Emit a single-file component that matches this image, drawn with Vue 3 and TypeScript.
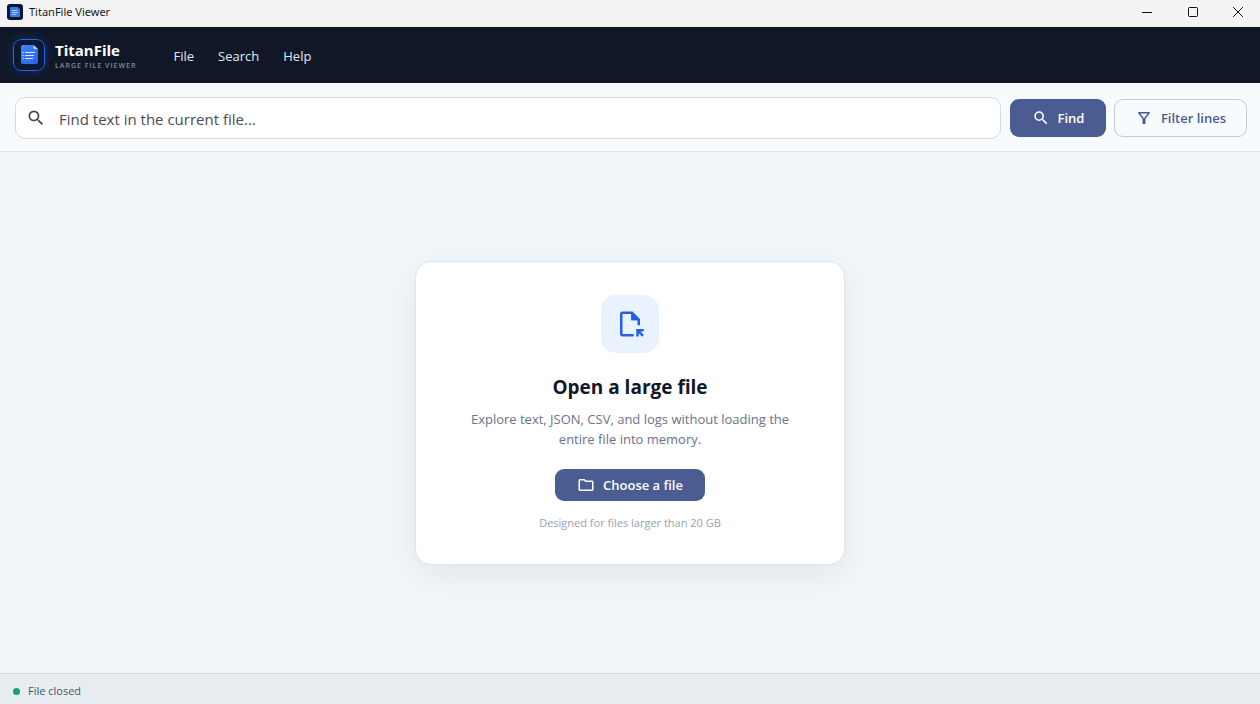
<script setup lang="ts">
import { ref } from 'vue'

const menus: string[] = ['File', 'Search', 'Help']
const query = ref<string>('')
const status = ref<string>('File closed')
</script>

<template>
  <div class="window">
    <div class="titlebar">
      <svg class="app-icon" viewBox="0 0 16 16" aria-hidden="true">
        <rect width="16" height="16" rx="3" fill="#0d1830" />
        <path d="M4 3h6.5L13 5.500V12a1 1 0 0 1-1 1H4a1 1 0 0 1-1-1V4a1 1 0 0 1 1-1z" fill="#3b7cf6" />
        <path d="M5 6.500h5M5 8.500h6M5 10.500h4" stroke="#cfe0ff" stroke-width=".8" />
      </svg>
      <span class="window-title">TitanFile Viewer</span>
      <div class="window-controls">
        <button type="button" aria-label="Minimize">
          <svg viewBox="0 0 12 12"><path d="M1 6.500h10" /></svg>
        </button>
        <button type="button" aria-label="Maximize">
          <svg viewBox="0 0 12 12"><rect x="1.500" y="1.500" width="9" height="9" rx="1" /></svg>
        </button>
        <button type="button" aria-label="Close">
          <svg viewBox="0 0 12 12"><path d="M1 1l10 10M11 1L1 11" /></svg>
        </button>
      </div>
    </div>

    <header class="header">
      <svg class="logo" viewBox="0 0 32 32" aria-hidden="true">
        <defs>
          <linearGradient id="page" x1="0" y1="0" x2="1" y2="1">
            <stop offset="0" stop-color="#3f86fb" />
            <stop offset="1" stop-color="#2b62e6" />
          </linearGradient>
        </defs>
        <rect x=".5" y=".5" width="31" height="31" rx="7.500" fill="#0c1933" stroke="#2563eb" />
        <path d="M10 6h10.500L25 10v13a2 2 0 0 1-2 2H10a2 2 0 0 1-2-2V8a2 2 0 0 1 2-2z" fill="url(#page)" />
        <path d="M20.500 6L25 10h-3.500a1 1 0 0 1-1-1z" fill="#b9d3ff" />
        <path d="M12 13.500h10M12 16.500h9M12 19.500h8" stroke="#d8e6ff" stroke-width="1.200" />
        <path d="M9.500 13.500h1.200M9.500 16.500h1.200M9.500 19.500h1.200" stroke="#d8e6ff" stroke-width="1.200" />
      </svg>
      <div class="brand">
        <span class="brand-name">TitanFile</span>
        <span class="brand-sub">LARGE FILE VIEWER</span>
      </div>
      <nav class="menu">
        <button v-for="item in menus" :key="item" type="button">{{ item }}</button>
      </nav>
    </header>

    <form class="toolbar" @submit.prevent>
      <label class="search">
        <svg viewBox="0 0 24 24" aria-hidden="true">
          <path d="M15.500 14h-.79l-.28-.27A6.470 6.470 0 0 0 16 9.500 6.500 6.500 0 1 0 9.500 16c1.610 0 3.090-.59 4.230-1.570l.27.28v.79l5 4.990L20.490 19l-4.990-5zm-6 0C7.010 14 5 11.990 5 9.500S7.010 5 9.500 5 14 7.010 14 9.500 11.990 14 9.500 14z" />
        </svg>
        <input v-model="query" type="text" placeholder="Find text in the current file..." aria-label="Find text in the current file" />
      </label>
      <button class="btn primary find" type="submit">
        <svg viewBox="0 0 24 24" aria-hidden="true">
          <path d="M15.500 14h-.79l-.28-.27A6.470 6.470 0 0 0 16 9.500 6.500 6.500 0 1 0 9.500 16c1.610 0 3.090-.59 4.230-1.570l.27.28v.79l5 4.990L20.490 19l-4.990-5zm-6 0C7.010 14 5 11.990 5 9.500S7.010 5 9.500 5 14 7.010 14 9.500 11.990 14 9.500 14z" />
        </svg>
        Find
      </button>
      <button class="btn outline" type="button">
        <svg viewBox="0 0 24 24" aria-hidden="true">
          <path d="M7 6h10l-5.010 6.300L7 6zm-2.750-.39C6.270 8.200 10 13 10 13v6c0 .55.45 1 1 1h2c.55 0 1-.45 1-1v-6s3.720-4.800 5.740-7.390A1 1 0 0 0 18.950 4H5.040c-.83 0-1.300.95-.79 1.610z" />
        </svg>
        Filter lines
      </button>
    </form>

    <main class="workspace">
      <section class="card">
        <div class="badge">
          <svg viewBox="0 0 24 24" aria-hidden="true">
            <path d="M14 2H6c-1.100 0-2 .9-2 2v16c0 1.100.9 2 2 2h9v-2H6V4h7v5h5v4h2V8z" />
            <path d="M13 3v6h6z" />
            <path d="M17 22v-6h6v2h-2.600l2.700 2.700-1.400 1.400L19 19.400V22z" />
          </svg>
        </div>
        <h1>Open a large file</h1>
        <p class="lead">Explore text, JSON, CSV, and logs without loading the entire file into memory.</p>
        <button class="btn primary choose" type="button">
          <svg viewBox="0 0 24 24" aria-hidden="true">
            <path d="M9.170 6l2 2H20v10H4V6h5.170M10 4H4c-1.100 0-1.990.9-1.990 2L2 18c0 1.100.9 2 2 2h16c1.100 0 2-.9 2-2V8c0-1.100-.9-2-2-2h-8l-2-2z" />
          </svg>
          Choose a file
        </button>
        <p class="note">Designed for files larger than 20 GB</p>
      </section>
    </main>

    <footer class="status">
      <span class="dot"></span>
      <span>{{ status }}</span>
    </footer>
  </div>
</template>

<style scoped>
* {
  box-sizing: border-box;
}
.window {
  display: flex;
  flex-direction: column;
  min-height: 100vh;
  background: #f1f6fa;
  color: #111827;
  font-family: "Open Sans", "Noto Sans", sans-serif;
}
button,
input {
  font-family: inherit;
}
button {
  border: 0;
  padding: 0;
  background: none;
  cursor: pointer;
}
svg {
  display: block;
  flex: none;
}

.titlebar {
  display: flex;
  align-items: center;
  height: 27px;
  padding: 0 0 4px 7px;
  background: #f3f3f3;
  color: #1a1a1a;
}
.app-icon {
  width: 16px;
  height: 16px;
}
.window-title {
  margin-left: 6px;
  font-family: "Noto Sans", sans-serif;
  font-size: 11px;
  line-height: 16px;
}
.window-controls {
  display: flex;
  margin-left: auto;
}
.window-controls button {
  display: grid;
  place-items: center;
  width: 46px;
  height: 22px;
}
.window-controls button:last-child {
  width: 44px;
}
.window-controls svg {
  width: 12px;
  height: 12px;
  fill: none;
  stroke: #111;
  stroke-width: 1;
}

.header {
  display: flex;
  align-items: center;
  height: 56px;
  padding: 0 13px;
  background: #101828;
}
.logo {
  width: 32px;
  height: 32px;
  border-radius: 8px;
  box-shadow: 0 0 10px rgba(37, 99, 235, 0.3);
}
.brand {
  display: flex;
  flex-direction: column;
  margin-left: 10px;
  padding-top: 2px;
}
.brand-name {
  color: #fff;
  font-size: 15px;
  font-weight: 700;
  line-height: 20px;
}
.brand-sub {
  color: #7f8a9e;
  font-size: 7px;
  font-weight: 600;
  letter-spacing: 1px;
  line-height: 12px;
}
.menu {
  display: flex;
  gap: 24px;
  margin-left: 37px;
  padding-top: 2px;
}
.menu button {
  color: #e2e8f0;
  font-size: 13px;
  line-height: 20px;
}

.toolbar {
  display: flex;
  align-items: center;
  gap: 8px;
  padding: 14px 13px 12px 15px;
  border-bottom: 1px solid #dde4ed;
  background: #f8fbfd;
}
.search {
  display: flex;
  flex: 1;
  align-items: center;
  height: 42px;
  margin-right: 1px;
  padding: 0 10px;
  border: 1px solid #d5daea;
  border-radius: 10px;
  background: #fff;
}
.search svg {
  width: 20px;
  height: 20px;
  fill: #45464f;
}
.search input {
  flex: 1;
  min-width: 0;
  margin-left: 13px;
  padding: 2px 0 0;
  border: 0;
  outline: 0;
  background: none;
  color: #33343c;
  font-size: 15px;
  line-height: 24px;
}
.search input::placeholder {
  color: #4b4c55;
  opacity: 1;
}
.btn {
  display: flex;
  align-items: center;
  justify-content: center;
  border-radius: 9px;
  font-size: 13px;
  font-weight: 600;
  line-height: 20px;
}
.btn svg {
  width: 18px;
  height: 18px;
  margin-right: 8px;
  fill: currentColor;
}
.primary {
  background: #4b5c92;
  color: #fff;
}
.find,
.outline {
  height: 38px;
}
.find {
  width: 96px;
}
.outline {
  width: 133px;
  border: 1px solid #c6c8d4;
  color: #4b5c92;
}

.workspace {
  display: grid;
  flex: 1;
  place-items: center;
  padding: 24px;
}
.card {
  display: flex;
  flex-direction: column;
  align-items: center;
  width: 100%;
  max-width: 430px;
  padding: 33px 36px;
  border: 1px solid #e0e5ec;
  border-radius: 16px;
  background: #fff;
  box-shadow: 0 10px 32px rgba(16, 24, 40, 0.07);
  text-align: center;
}
.badge {
  display: grid;
  place-items: center;
  width: 58px;
  height: 58px;
  border-radius: 15px;
  background: #eaf2ff;
}
.badge svg {
  width: 30px;
  height: 30px;
  fill: #2560e6;
}
h1 {
  margin: 20px 0 0;
  font-size: 19px;
  font-weight: 700;
  line-height: 28px;
}
.lead {
  margin: 8px 0 0;
  color: #6b7389;
  font-size: 13px;
  line-height: 20px;
}
.choose {
  width: 150px;
  height: 32px;
  margin-top: 20px;
}
.note {
  margin: 14px 0 0;
  color: #98a2b3;
  font-size: 11px;
  line-height: 16px;
}

.status {
  display: flex;
  align-items: center;
  gap: 8px;
  height: 31px;
  padding: 4px 13px 0;
  border-top: 1px solid #d3d9e1;
  background: #e8edf2;
  color: #475467;
  font-size: 11px;
  line-height: 16px;
}
.dot {
  width: 7px;
  height: 7px;
  border-radius: 50%;
  background: #17a36b;
}
</style>
